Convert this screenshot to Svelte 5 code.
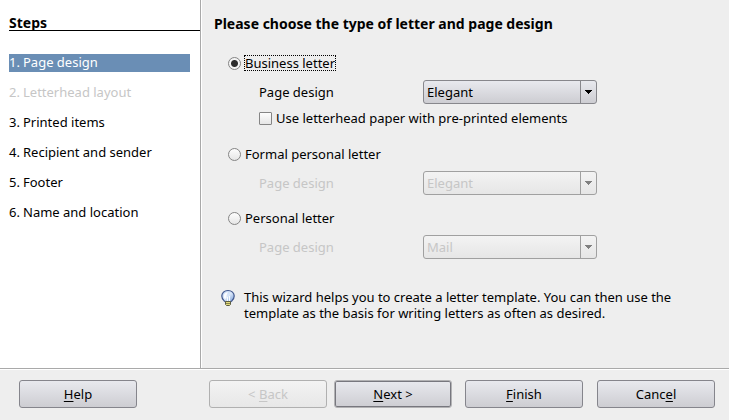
<script>
  const steps = [
    { label: 'Page design' },
    { label: 'Letterhead layout', disabled: true },
    { label: 'Printed items' },
    { label: 'Recipient and sender' },
    { label: 'Footer' },
    { label: 'Name and location' }
  ];
  let current = $state(0);

  const letters = [
    { id: 'business', label: 'Business letter', design: 'Elegant' },
    { id: 'formal', label: 'Formal personal letter', design: 'Elegant' },
    { id: 'personal', label: 'Personal letter', design: 'Mail' }
  ];
  let kind = $state('business');
  let preprinted = $state(false);
</script>

<div class="wizard">
  <div class="body">
    <nav class="steps" aria-label="Steps">
      <h2>Steps</h2>
      <ol>
        {#each steps as step, i}
          <li>
            <button
              type="button"
              class="step"
              class:current={current === i}
              disabled={step.disabled}
              onclick={() => (current = i)}
            ><span class="number">{i + 1}.</span><span>{step.label}</span></button>
          </li>
        {/each}
      </ol>
    </nav>

    <main>
      <h1>Please choose the type of letter and page design</h1>
      {#each letters as letter}
        <section class={letter.id}>
          <label class="choice">
            <input type="radio" name="kind" value={letter.id} bind:group={kind} />
            <span class="caption" class:focused={kind === letter.id}>{letter.label}</span>
          </label>
          <div class="design" class:off={kind !== letter.id}>
            <label for="design-{letter.id}">Page design</label>
            <div class="combo">
              <select id="design-{letter.id}" disabled={kind !== letter.id}>
                <option>{letter.design}</option>
              </select>
              <svg width="7" height="4" viewBox="0 0 7 4" shape-rendering="crispEdges" aria-hidden="true">
                <path d="M0 0h7v1h-1v1h-1v1h-1v1h-1v-1h-1v-1h-1v-1h-1z" fill="currentColor" />
              </svg>
            </div>
          </div>
          {#if letter.id === 'business'}
            <label class="check">
              <input type="checkbox" bind:checked={preprinted} />
              <span>Use letterhead paper with pre-printed elements</span>
            </label>
          {/if}
        </section>
      {/each}

      <div class="hint">
        <svg width="16" height="18" viewBox="0 0 16 18" aria-hidden="true">
          <defs>
            <linearGradient id="glass" x1="0" y1="0" x2="1" y2="1">
              <stop offset="0" stop-color="#b9d0f2" />
              <stop offset="0.5" stop-color="#dbe8fa" />
              <stop offset="1" stop-color="#6f95d2" />
            </linearGradient>
          </defs>
          <path d="M8 1.500C4.300 1.500 1.800 3.900 1.800 7c0 2.200 1 3.500 2.200 4.700L5.500 13h5l1.500-1.300C13.200 10.500 14.200 9.200 14.200 7c0-3.100-2.500-5.500-6.200-5.500z" fill="url(#glass)" stroke="#40568c" stroke-width="1.200" />
          <path d="M3.800 7Q3.800 3.500 8 3.300Q6.500 5.500 6.300 9L5 10Q3.800 9 3.800 7z" fill="#fff" opacity="0.9" />
          <path d="M7.500 8v4M9.500 7v5" stroke="#f7fbff" />
          <path d="M5.500 12.500h5v3l-1 1h-3l-1-1z" fill="#e2da7c" stroke="#5c5d42" />
          <path d="M6 14.500h4" stroke="#8a8750" />
        </svg>
        <p>This wizard helps you to create a letter template. You can then use the template as the basis for writing letters as often as desired.</p>
      </div>
    </main>
  </div>

  <footer>
    <button type="button" class="push"><u>H</u>elp</button>
    <div class="actions">
      <div class="travel">
        <button type="button" class="push" disabled>&lt; <u>B</u>ack</button>
        <button type="button" class="push default"><u>N</u>ext &gt;</button>
      </div>
      <div class="closing">
        <button type="button" class="push"><u>F</u>inish</button>
        <button type="button" class="push">Canc<u>e</u>l</button>
      </div>
    </div>
  </footer>
</div>

<style>
  :global(body) {
    margin: 0;
    background: #eee;
  }
  .wizard {
    display: flex;
    flex-direction: column;
    min-height: 100vh;
    color: #000;
    background: #eee;
    font: 13px/16px "Noto Sans", "Open Sans", sans-serif;
  }
  .wizard * {
    box-sizing: border-box;
  }
  .body {
    display: flex;
    flex: 1;
    border-bottom: 1px solid #a9a9a9;
  }
  h1,
  h2 {
    margin: 0;
    font-size: 14px;
    line-height: 16px;
    font-weight: bold;
  }
  .steps {
    flex: 0 0 201px;
    padding: 16px 0 0 9px;
    background: #fff;
    border-right: 1px solid #a9a9a9;
  }
  h2 {
    border-bottom: 1px solid #000;
    line-height: 14px;
  }
  ol {
    display: flex;
    flex-direction: column;
    gap: 12px;
    margin: 23px 10px 0 0;
    padding: 0;
    list-style: none;
  }
  .step {
    display: flex;
    width: 100%;
    height: 18px;
    padding: 0 0 2px;
    border: 0;
    background: none;
    color: inherit;
    font: inherit;
    text-align: left;
  }
  .number {
    width: 14px;
  }
  .step.current {
    background: #6a8eb5;
    color: #fff;
  }
  .step:disabled {
    color: #c6c6c6;
  }
  main {
    flex: 1;
    min-width: 0;
    padding: 16px 14px 12px 12px;
    border-left: 1px solid #fff;
  }
  section {
    display: flex;
    flex-direction: column;
    margin-top: 15px;
    padding-left: 14px;
  }
  section.business {
    margin-top: 22px;
  }
  section.personal {
    margin-top: 14px;
  }
  .choice {
    display: flex;
    align-items: center;
    align-self: flex-start;
    gap: 3px;
    height: 18px;
  }
  input {
    appearance: none;
    width: 13px;
    height: 13px;
    margin: 0;
    border: 1px solid #858585;
    background: linear-gradient(#fdfdfd, #e6e6e6);
  }
  input[type="radio"] {
    border-radius: 50%;
  }
  input[type="radio"]:checked {
    background: radial-gradient(circle, #2c2c2c 3px, #f4f4f4 4px);
  }
  input[type="checkbox"] {
    border-radius: 1px;
  }
  input[type="checkbox"]:checked {
    background: radial-gradient(#2c2c2c 3px, #f4f4f4 4px);
  }
  .caption {
    border: 1px solid transparent;
    line-height: 14px;
  }
  .caption.focused {
    border: 1px dotted #000;
  }
  .design {
    display: flex;
    align-items: center;
    margin: 8px 0 0 31px;
  }
  .design label {
    width: 164px;
  }
  .design.off {
    color: #c6c6c6;
  }
  .combo {
    position: relative;
    width: 174px;
  }
  select {
    appearance: none;
    display: block;
    width: 100%;
    height: 24px;
    padding: 0 20px 0 3px;
    border: 1px solid #87878c;
    border-radius: 3px;
    background:
      linear-gradient(#87878c, #87878c) right 15px top / 1px 100% no-repeat,
      linear-gradient(#e8e9ee, #cdcdd2);
    color: #000;
    font: inherit;
  }
  select:disabled {
    border-color: #a0a0a0;
    background:
      linear-gradient(#a0a0a0, #a0a0a0) right 15px top / 1px 100% no-repeat,
      linear-gradient(#f3f3f3, #e6e6e6);
    color: #c6c6c6;
    opacity: 1;
  }
  .combo svg {
    position: absolute;
    top: 10px;
    right: 5px;
    color: #000;
    pointer-events: none;
  }
  .off .combo svg {
    color: #808080;
  }
  .check {
    display: flex;
    align-items: center;
    gap: 4px;
    height: 18px;
    margin: 5px 0 3px 31px;
  }
  .hint {
    display: flex;
    gap: 8px;
    margin-top: 30px;
    padding-left: 6px;
  }
  .hint svg {
    flex: none;
  }
  .hint p {
    max-width: 460px;
    margin: 0;
  }
  footer {
    display: flex;
    justify-content: space-between;
    padding: 10px 14px 12px 19px;
    border-top: 1px solid #fff;
  }
  .actions {
    display: flex;
    gap: 13px;
  }
  .travel {
    display: flex;
    gap: 7px;
  }
  .closing {
    display: flex;
    gap: 14px;
  }
  .push {
    width: 118px;
    height: 28px;
    padding: 0;
    border: 1px solid #85858c;
    border-radius: 3px;
    background: linear-gradient(#e8e9ee, #cdcdd2);
    color: #000;
    font: inherit;
  }
  .push.default {
    border-color: #b2b2b4;
    box-shadow: inset 0 0 0 1px #77777e;
  }
  .push:disabled {
    border-color: #b0b0b0;
    background: linear-gradient(#f3f3f3, #e7e7e7);
    color: #c6c6c6;
  }
  u {
    text-underline-offset: 2px;
  }
</style>
